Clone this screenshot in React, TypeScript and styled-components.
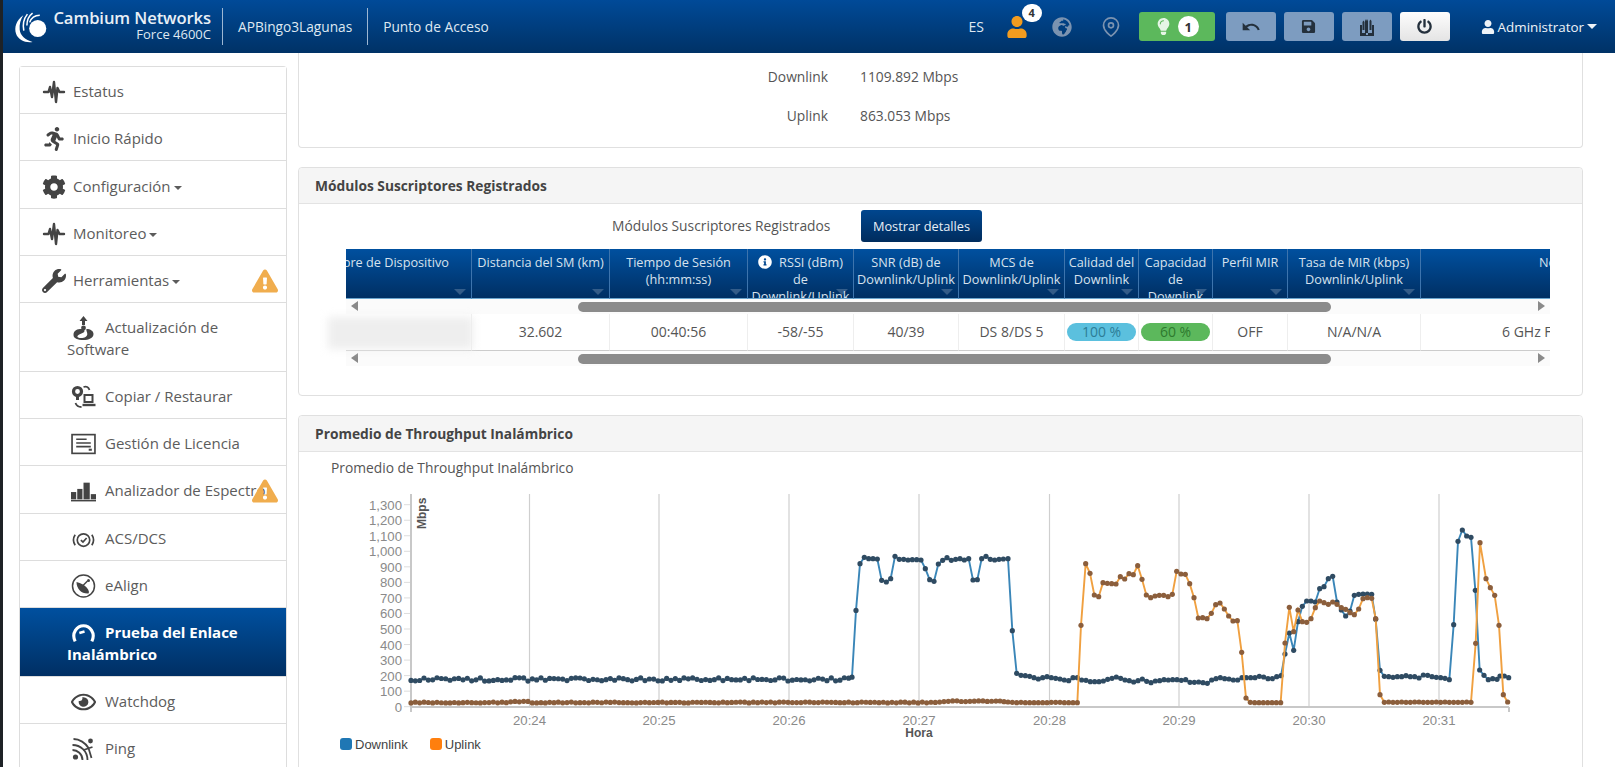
import React from 'react';
import styled, { createGlobalStyle } from 'styled-components';
import { FaCog, FaWrench, FaRunning, FaUser, FaLightbulb, FaSave, FaPowerOff, FaExclamationTriangle, FaInfoCircle, FaGlobeAfrica, FaRegEye } from 'react-icons/fa';
import { FiMapPin } from 'react-icons/fi';
import { MdUndo } from 'react-icons/md';

const Global = createGlobalStyle`
  html, body { margin: 0; padding: 0; height: 767px; overflow: hidden; background: #fff; }
  body { font-family: "Open Sans", "Noto Sans", sans-serif; color: #555; border-left: 3px solid #1e2226; box-sizing: border-box; }
  * { box-sizing: border-box; }
`;

const Shell = styled.div`width: 1612px; height: 767px; overflow: hidden; display: flex; flex-direction: column;`;
const TopBar = styled.header`
  height: 53px; flex: none; display: flex; align-items: center; color: #dfe8f2; font-size: 14px;
  background: linear-gradient(#004a98, #003266); padding-left: 11px;
`;
const Brand = styled.div`display: flex; align-items: center; width: 209px; height: 37px; border-right: 1px solid #9db7d3;`;
const BrandText = styled.div`margin: -2px 0 0 5px; width: 159px; text-align: right; line-height: 1;`;
const BrandName = styled.div`font-size: 16.6px; font-weight: 600; color: #e8eff6; white-space: nowrap; letter-spacing: -0.1px;`;
const BrandModel = styled.div`font-size: 13px; margin-top: 2px;`;
const HeaderCell = styled.div`height: 37px; display: flex; align-items: center; padding: 0 15px; border-right: ${p => p.$line ? '1px solid #9db7d3' : 'none'}; font-size: 13.7px; white-space: nowrap;`;
const HeaderRight = styled.div`margin-left: auto; display: flex; align-items: center; padding-right: 18px;`;
const Lang = styled.span`font-size: 14px; width: 37px;`;
const Alerts = styled.span`position: relative; display: flex; width: 46px; color: #f39c1f; font-size: 22px;`;
const CountBadge = styled.span`
  position: absolute; left: 16px; top: -12px; width: 20px; height: 18px; border-radius: 9px; background: #fff;
  color: #333; font-size: 11px; font-weight: 700; display: flex; align-items: center; justify-content: center;
`;
const NavGlyph = styled.span`display: flex; color: #7b93b0; font-size: 20px; width: ${p => p.$w}px;`;
const GreenButton = styled.div`
  width: 76px; height: 29px; border-radius: 3px; background: #5cb85c; display: flex; align-items: center; justify-content: center; gap: 6px;
  color: #e6f5e6; font-size: 17px; margin-left: 4px;
`;
const LampCount = styled.span`width: 21px; height: 21px; border-radius: 50%; background: #fff; color: #333; font-size: 13px; font-weight: 700; display: flex; align-items: center; justify-content: center;`;
const ToolButton = styled.div`
  width: 50px; height: 29px; margin-left: ${p => p.$ml}px; border-radius: 3px; display: flex; align-items: center; justify-content: center; font-size: ${p => p.$fs || 15}px; color: #24303c;
  background: ${p => p.$light ? 'linear-gradient(#fdfdfd, #e4e4e4)' : '#7d9cc0'};
`;
const UserMenu = styled.div`display: flex; align-items: center; gap: 3px; margin-left: 31px; font-size: 13.4px; color: #eef3f8;`;
const Caret = styled.span`display: inline-block; width: 0; height: 0; margin-left: ${p => p.$big ? 0 : 3}px; vertical-align: middle; border-left: ${p => p.$big ? 5 : 4}px solid transparent; border-right: ${p => p.$big ? 5 : 4}px solid transparent; border-top: ${p => p.$big ? 5 : 4}px solid currentColor;`;

const Body = styled.div`flex: 1; min-height: 0; display: flex; align-items: flex-start;`;
const Side = styled.nav`
  width: 268px; margin: 13px 0 0 16px; flex: none; border: 1px solid #ddd; border-bottom: 0; border-radius: 4px 4px 0 0; background: #fff;
`;
const Item = styled.div`
  position: relative; font-size: 15px; line-height: 21.4px; border-bottom: 1px solid #ddd;
  padding: 14.2px 8px 10.65px ${p => p.$sub ? 47 : 22}px;
  color: ${p => p.$active ? '#fff' : '#5c5c5c'}; font-weight: ${p => p.$active ? 700 : 400};
  background: ${p => p.$active ? 'linear-gradient(#00509f, #002f63)' : '#fff'};
`;
const ItemIcon = styled.span`
  display: inline-block; vertical-align: -2px; height: 14px; width: ${p => p.$sub ? 25 : 24}px;
  margin: ${p => p.$sub ? '0 9px 0 4px' : '0 7px 0 0'}; color: ${p => p.$active ? '#fff' : '#444'};
  svg { display: block; width: ${p => p.$sub ? 25 : 24}px; height: 24px; margin: -5px 0; }
`;
const Warn = styled.span`position: absolute; right: 8px; top: ${p => p.$top}px; color: #f0ad4e; font-size: 26px; display: flex;`;

const Main = styled.main`flex: 1; margin: 0 32px 0 11px; display: flex; flex-direction: column; gap: 19px; min-width: 0;`;
const Panel = styled.section`position: relative; background: #fff; border: 1px solid #e0e0e0; border-radius: ${p => p.$cut ? '0 0 4px 4px' : '4px'}; ${p => p.$cut ? 'border-top: 0;' : ''} ${p => p.$tail ? 'padding-bottom: 40px;' : ''}`;
const PanelHead = styled.h3`margin: 0; height: 36px; padding: 0 16px; display: flex; align-items: center; background: #f5f5f5; border-bottom: 1px solid #e3e3e3; font-size: 13.75px; font-weight: 700; color: #444; border-radius: 4px 4px 0 0;`;
const Rates = styled.div`padding: 4px 0 11.5px;`;
const Rate = styled.div`display: grid; grid-template-columns: 529px auto; column-gap: 32px; height: 39px; align-items: center; font-size: 13.8px; color: #555;`;
const RateLabel = styled.span`text-align: right;`;
const SmBar = styled.div`display: flex; align-items: center; height: 32px; margin-top: 6px; padding-left: 313px; font-size: 13.8px; color: #555;`;
const SmLabel = styled.span`width: 218px; white-space: nowrap;`;
const PrimaryButton = styled.div`width: 121px; height: 32px; margin-left: 31px; border-radius: 3px; display: flex; align-items: center; justify-content: center; background: linear-gradient(#00468e, #002c5d); color: #e8eff6; font-size: 12.8px;`;
const TableClip = styled.div`position: relative; width: 1204px; margin: 7px 0 29px 47px; overflow: hidden;`;
const Row = styled.div`display: flex; margin-left: -54px;`;
const HeadCell = styled.div`
  position: relative; flex: none; width: ${p => p.$w}px; height: 50px; overflow: hidden; padding: 5px 1px 0; text-align: ${p => p.$align || 'center'}; ${p => p.$pad ? `padding-${p.$align === 'right' ? 'right' : 'left'}: ${p.$pad}px;` : ''}
  background: linear-gradient(#00509f, #002f63); color: #d7e2ee; font-size: 12.7px; line-height: 17px; border-right: 1px solid #3d74ad; border-bottom: 1px solid #6ba6cf;
`;
const Sort = styled.span`position: absolute; right: 5px; bottom: 3px; border-left: 6px solid transparent; border-right: 6px solid transparent; border-top: 6px solid rgba(255,255,255,.2);`;
const HeadInfo = styled.span`display: inline-flex; vertical-align: -2px; font-size: 14px; color: #fff; margin-right: 7px;`;
const Track = styled.div`position: relative; height: ${p => p.$h}px; background: #fbfbfb; display: flex; align-items: center; justify-content: space-between; padding: 0 5px;`;
const Arrow = styled.span`width: 0; height: 0; border-top: 5px solid transparent; border-bottom: 5px solid transparent; ${p => p.$right ? 'border-left: 7px solid #8a8a8a;' : 'border-right: 7px solid #8a8a8a;'}`;
const Thumb = styled.span`position: absolute; left: 232px; width: 753px; top: 3px; height: 10px; border-radius: 5px; background: #8b8b8b;`;
const BodyCell = styled.div`flex: none; width: ${p => p.$w}px; height: 37px; overflow: hidden; display: flex; align-items: center; justify-content: ${p => p.$start ? 'flex-start' : 'center'}; ${p => p.$start ? `padding-left: ${p.$start}px;` : ''} white-space: nowrap; font-size: 14px; color: #555; border-right: 1px solid #eee; border-bottom: 1px solid #ccc;`;
const Pill = styled.span`width: 69px; height: 18px; border-radius: 9px; background: ${p => p.$c}; color: ${p => p.$t}; font-size: 14px; display: flex; align-items: center; justify-content: center;`;
const Smudge = styled.div`position: absolute; left: 29px; top: 149px; width: 145px; height: 32px; background: #eeeeee; filter: blur(4px);`;
const ChartTitle = styled.div`font-size: 13.8px; color: #555; padding: 6px 0 0 32px; height: 34px;`;
const ChartSvg = styled.svg`display: block; margin-left: 31px;`;
const Legend = styled.div`display: flex; gap: 22px; padding-left: 41px; margin-top: -5px; font-family: "Liberation Sans", Arial, sans-serif; font-size: 13px; color: #444;`;
const LegendItem = styled.span`display: flex; align-items: center; gap: 3px;`;
const Swatch = styled.span`width: 12px; height: 12px; border-radius: 3px; background: ${p => p.$c};`;

const Line = ({ d, w = 2 }: { d: string; w?: number }) => <svg viewBox="0 0 24 24" fill="none" stroke="currentColor" strokeWidth={w} strokeLinejoin="round" strokeLinecap="round"><path d={d} /></svg>;
const Pulse = () => <Line w={2.4} d="M2 12H6.5L8 7L10 17L12 2L14 22L15.5 8L17.5 12H22" />;
const UpdateIcon = () => <svg viewBox="0 0 24 24" fill="currentColor"><path d="M12 0L16 5H13.5V9H10.5V5H8Z" /><circle cx="12" cy="12" r="2.4" /><path d="M2 19C2 14 6 13 10 13C13 13 14 15 12 16.5C9 18.5 7 18 6 20C5 22 11 23 14 21C18 18.5 14 15 15 13C19 13 22 15 22 18C22 22 17 24 12 24C6 24 2 22.5 2 19Z" /></svg>;
const CopyIcon = () => <svg viewBox="0 0 24 24" fill="none" stroke="currentColor" strokeWidth="2"><circle cx="6" cy="6.5" r="4" strokeWidth="3.2" /><path d="M6 11V15" strokeWidth="3" /><rect x="13" y="10" width="8" height="7" /><path d="M11 20H24" strokeWidth="2.4" /><path d="M12 2C15 1 17 2 18 5M4 18C5 21 7 22 10 22" strokeWidth="1.8" /></svg>;
const LicenseIcon = () => <svg viewBox="0 0 24 20" fill="none" stroke="currentColor"><rect x="1" y="1" width="22" height="18" strokeWidth="1.6" /><path d="M5 5.5H15M5 9H19M5 12.5H19" strokeWidth="1.5" /><path d="M17 15.5H20" strokeWidth="2" /></svg>;
const BarsIcon = () => <svg viewBox="0 0 24 20" fill="currentColor"><rect x="0" y="11" width="5" height="7" /><rect x="6" y="8" width="5" height="10" /><rect x="12" y="2" width="6" height="16" /><rect x="19" y="13" width="5" height="5" /><rect y="18.5" width="24" height="1.5" /></svg>;
const AcsIcon = () => <svg viewBox="0 0 24 20" fill="none" stroke="currentColor" strokeWidth="1.6"><circle cx="12" cy="11" r="6" /><path d="M9.5 11L11.5 13L15 9" /><path d="M4 6C2 9 2 13 4 16M20 6C22 9 22 13 20 16" /></svg>;
const AlignIcon = () => <svg viewBox="0 0 24 24"><circle cx="12" cy="12" r="11" fill="none" stroke="currentColor" strokeWidth="1.5" /><path d="M5 8C5 15 10 20 17 19.5C19 17 14 10 5 8Z" fill="currentColor" /><path d="M11 12L16 7" stroke="currentColor" strokeWidth="1.4" /><circle cx="17" cy="6.5" r="1.5" fill="currentColor" /></svg>;
const GaugeIcon = () => <svg viewBox="0 0 24 20" fill="none" stroke="currentColor" strokeWidth="3"><path d="M4 18C0 10 6 3 12 3C18 3 24 10 20 18" /><path d="M8 10L13 8.5" strokeWidth="2.4" /></svg>;
const PingIcon = () => <svg viewBox="0 0 24 24" fill="none" stroke="currentColor" strokeWidth="1.8"><circle cx="4" cy="20" r="2.6" fill="currentColor" stroke="none" /><path d="M1 13C6 13 11 17 11 23M1 8C9 8 16 14 16 23" /><circle cx="19" cy="4" r="2.4" fill="currentColor" stroke="none" /><path d="M2 2C8 2 14 6 17 11L20 21M12 13L21 10" /></svg>;
const Logo = () => (
  <svg width="33" height="33" viewBox="0 0 32 32" fill="#fff" style={{ flex: 'none' }}>
    <path d="M9 5C2 10 0 17 2 23C4 29 11 32 18 31C11 29 6 25 5.5 19C5 14 6.5 9 9 5Z" />
    <circle cx="23" cy="18" r="8.3" />
    <path d="M13 4C9 9 8.5 15 9.5 20M18 3C14 6 12.5 10 12.5 15M25 5C20 5 16.5 8 15.2 12" fill="none" stroke="#fff" strokeWidth="1.5" />
  </svg>
);
const ToolsIcon = () => <svg width="14" height="18" viewBox="0 0 14 18" fill="currentColor"><path d="M0 7H2V15H5V3L6 1L7 3V1L8 3V15H12V7H14V18H0Z" /><path d="M9.5 3L10.5 1.5L11.5 3V12H9.5Z" /><path d="M2.5 4L3.5 2.5L4.5 4V12H2.5Z" /><rect x="6" y="15" width="2" height="2" fill="#7d9cc0" /></svg>;

const items: { label: string; icon: React.ReactNode; sub?: boolean; caret?: boolean; active?: boolean; warn?: number }[] = [
  { label: 'Estatus', icon: <Pulse /> },
  { label: 'Inicio Rápido', icon: <FaRunning /> },
  { label: 'Configuración', icon: <FaCog />, caret: true },
  { label: 'Monitoreo', icon: <Pulse />, caret: true },
  { label: 'Herramientas', icon: <FaWrench />, caret: true, warn: 12 },
  { label: 'Actualización de Software', icon: <UpdateIcon />, sub: true },
  { label: 'Copiar / Restaurar', icon: <CopyIcon />, sub: true },
  { label: 'Gestión de Licencia', icon: <LicenseIcon />, sub: true },
  { label: 'Analizador de Espectro', icon: <BarsIcon />, sub: true, warn: 12 },
  { label: 'ACS/DCS', icon: <AcsIcon />, sub: true },
  { label: 'eAlign', icon: <AlignIcon />, sub: true },
  { label: 'Prueba del Enlace Inalámbrico', icon: <GaugeIcon />, sub: true, active: true },
  { label: 'Watchdog', icon: <FaRegEye />, sub: true },
  { label: 'Ping', icon: <PingIcon />, sub: true },
];

const columns: { head: React.ReactNode; cell: React.ReactNode; w: number }[] = [
  { head: 'Distancia del SM (km)', cell: '32.602', w: 138 },
  { head: <>Tiempo de Sesión<br />(hh:mm:ss)</>, cell: '00:40:56', w: 138 },
  { head: <><HeadInfo><FaInfoCircle /></HeadInfo>RSSI (dBm)<br />de<br />Downlink/Uplink</>, cell: '-58/-55', w: 106 },
  { head: <>SNR (dB) de<br />Downlink/Uplink</>, cell: '40/39', w: 105 },
  { head: <>MCS de<br />Downlink/Uplink</>, cell: 'DS 8/DS 5', w: 106 },
  { head: <>Calidad del<br />Downlink</>, cell: <Pill $c="#5bc0de" $t="#2d7d96">100 %</Pill>, w: 74 },
  { head: 'Capacidad de Downlink', cell: <Pill $c="#5cb85c" $t="#2e7a2e">60 %</Pill>, w: 74 },
  { head: 'Perfil MIR', cell: 'OFF', w: 75 },
  { head: <>Tasa de MIR (kbps)<br />Downlink/Uplink</>, cell: 'N/A/N/A', w: 133 },
];

const px = (x: number, y: number) => `${x},${y}`;
const yOf = (v: number) => 705.7 - v * 0.1554;
const rnd = (i: number) => { const s = Math.sin(i * 12.9898 + 4.1) * 43758.5453; return s - Math.floor(s); };
const z8 = (a: number[]) => { const o: [number, number][] = []; for (let i = 0; i < a.length; i += 2) o.push([1000 + a[i] / 3, 500 + a[i + 1] / 3]); return o; };
const z9 = (a: number[]) => { const o: [number, number][] = []; for (let i = 0; i < a.length; i += 2) o.push([840 + a[i] / 3, 530 + a[i + 1] / 3]); return o; };
const flat = (from: number, to: number, zy: number) => { const o: number[] = []; for (let x = from; x <= to; x += 13) o.push(x, zy + (rnd(x) > 0.7 ? -1 : 0)); return o; };

const blue: [number, number][] = [];
for (let x = 411; x <= 852; x += 4.333) blue.push([x, yOf(165 + rnd(x) * 22)]);
blue.push([852, yOf(190)], [856, 609.4]);
blue.push(...z9([60, 98, 73, 79, 86, 83, 99, 83, 112, 84, 125, 148, 139, 153, 152, 143, 165, 76, 178, 85, 191, 85, 204, 87, 217, 86, 230, 86, 243, 87, 256, 113, 269, 146, 282, 151, 295, 99, 308, 88, 321, 80, 334, 88, 347, 85, 360, 83, 373, 87, 386, 83, 399, 147, 412, 146, 425, 83, 438, 76, 451, 85, 464, 87, 477, 85, 490, 84, 504, 83]));
blue.push(...z8([37, 389, 50, 517, 63, 523, 76, 524, 89, 526, 102, 530, 115, 534, 128, 530, 141, 527, 154, 530, 167, 532, 180, 534, 193, 537, 206, 539, 219, 530, 232, 530, 245, 537, 258, 538, 271, 542, 284, 542, 297, 542, 310, 540, 323, 535, 336, 532, 349, 528, 362, 532, 375, 537, 388, 539, 401, 543, 414, 539, 427, 534, 440, 541, 453, 545, 466, 540, 479, 539, 492, 536, 505, 537, 518, 536, 531, 536, 544, 538, 557, 536, 570, 544, 583, 544, 596, 543, 609, 545, 622, 547, 635, 537, 648, 533, 661, 530, 674, 533, 687, 534, 700, 537, 713, 537, 726, 530, 739, 530, 752, 530, 765, 530, 778, 526, 791, 528, 804, 533, 817, 533, 830, 527, 843, 524, 855, 459, 868, 396, 881, 448, 894, 362, 907, 316, 920, 300, 933, 300, 946, 303, 959, 263, 972, 257, 985, 233, 998, 226, 1011, 303, 1024, 327, 1037, 345, 1050, 330, 1063, 283, 1076, 280, 1089, 279, 1102, 279, 1115, 280, 1127, 355, 1140, 508, 1153, 526, 1166, 527, 1179, 529, 1192, 527, 1205, 527, 1218, 524, 1231, 527, 1244, 527, 1257, 531, 1270, 522, 1283, 523, 1296, 527, 1309, 529, 1322, 530, 1335, 532, 1348, 536, 1361, 371, 1374, 121, 1387, 87, 1400, 105, 1413, 109, 1426, 268, 1439, 507, 1452, 523, 1465, 536, 1478, 533, 1491, 535, 1500, 525, 1513, 525, 1526, 530]));

const orange: [number, number][] = [];
for (let x = 411; x < 1000; x += 4.333) orange.push([x, yOf(24 + rnd(x + 7) * 6 + (x > 940 ? 8 : 0) + (x > 510 && x < 530 ? 5 : 0))]);
orange.push(...z8([0, 600, 12, 602, 24, 603, 37, 604, ...flat(50, 232, 605), 243, 373, 257, 188, 270, 217, 283, 282, 296, 287, 309, 245, 322, 247, 335, 248, 348, 249, 361, 227, 374, 234, 387, 218, 400, 221, 413, 194, 426, 235, 439, 282, 452, 290, 465, 285, 478, 283, 491, 283, 504, 287, 517, 280, 530, 211, 543, 219, 556, 220, 569, 248, 582, 290, 595, 351, 608, 350, 621, 353, 634, 337, 647, 311, 660, 306, 673, 324, 686, 345, 699, 360, 712, 359, 725, 454, 738, 591, ...flat(751, 843, 605), 855, 426, 868, 319, 881, 392, 894, 327, 907, 362, 920, 364, 933, 353, 946, 320, 959, 300, 972, 305, 985, 310, 998, 303, 1011, 310, 1024, 320, 1037, 325, 1050, 335, 1063, 341, 1076, 324, 1089, 293, 1102, 290, 1115, 292, 1127, 353, 1140, 581, ...flat(1153, 1414, 604), 1427, 427, 1440, 125, 1458, 233, 1471, 260, 1484, 283, 1497, 373, 1510, 581, 1523, 603]));

const Series = ({ pts, stroke, dot }: { pts: [number, number][]; stroke: string; dot: string }) => (
  <g>
    <polyline points={pts.map(p => px(p[0], p[1])).join(' ')} fill="none" stroke={stroke} strokeWidth="1.9" />
    {pts.map((p, i) => <circle key={i} cx={p[0]} cy={p[1]} r="2.6" fill={dot} />)}
  </g>
);

const Chart = () => {
  const gx = [529.5, 659, 789, 919, 1049.5, 1179, 1309, 1439];
  const times = ['20:24', '20:25', '20:26', '20:27', '20:28', '20:29', '20:30', '20:31'];
  const ticks = Array.from({ length: 14 }, (_, i) => i * 100);
  return (
    <ChartSvg width="1200" height="256" viewBox="330 485 1200 256" fontFamily="'Liberation Sans', Arial, sans-serif">
      {gx.map(x => <line key={x} x1={x} x2={x} y1={493} y2={706} stroke="#cfcfcf" strokeWidth="1.2" />)}
      {ticks.map(t => (
        <g key={t}>
          <line x1={404} x2={411} y1={yOf(t)} y2={yOf(t)} stroke="#ddd" />
          <text x={402} y={yOf(t) + 5} textAnchor="end" fontSize="13.2" fill="#8a8a8a">{t.toLocaleString('en-US')}</text>
        </g>
      ))}
      <line x1={411} x2={411} y1={493} y2={711} stroke="#c8c8c8" strokeWidth="2" />
      <line x1={411} x2={1509} y1={706} y2={706} stroke="#c8c8c8" strokeWidth="2" />
      <line x1={1509} x2={1509} y1={706} y2={711} stroke="#c8c8c8" strokeWidth="2" />
      {gx.map((x, i) => <text key={x} x={x} y={724} textAnchor="middle" fontSize="13.2" fill="#8a8a8a">{times[i]}</text>)}
      <text x={919} y={736} textAnchor="middle" fontSize="12" fontWeight="700" fill="#555">Hora</text>
      <text transform="translate(426 528) rotate(-90)" fontSize="12" fontWeight="700" fill="#555">Mbps</text>
      <Series pts={blue} stroke="#3a86b8" dot="#2f4b62" />
      <Series pts={orange} stroke="#f0a040" dot="#8b5e3c" />
    </ChartSvg>
  );
};

export default function App() {
  return (
    <Shell>
      <Global />
      <TopBar>
        <Brand>
          <Logo />
          <BrandText>
            <BrandName>Cambium Networks</BrandName>
            <BrandModel>Force 4600C</BrandModel>
          </BrandText>
        </Brand>
        <HeaderCell $line>APBingo3Lagunas</HeaderCell>
        <HeaderCell>Punto de Acceso</HeaderCell>
        <HeaderRight>
          <Lang>ES</Lang>
          <Alerts><FaUser /><CountBadge>4</CountBadge></Alerts>
          <NavGlyph $w={49}><FaGlobeAfrica /></NavGlyph>
          <NavGlyph $w={34}><FiMapPin /></NavGlyph>
          <GreenButton><FaLightbulb /><LampCount>1</LampCount></GreenButton>
          <ToolButton $ml={11} $fs={20}><MdUndo /></ToolButton>
          <ToolButton $ml={8}><FaSave /></ToolButton>
          <ToolButton $ml={8}><ToolsIcon /></ToolButton>
          <ToolButton $ml={8} $light><FaPowerOff /></ToolButton>
          <UserMenu><FaUser size={14} />Administrator<Caret $big /></UserMenu>
        </HeaderRight>
      </TopBar>
      <Body>
        <Side>
          {items.map(it => (
            <Item key={it.label} $sub={it.sub} $active={it.active}>
              <ItemIcon $sub={it.sub} $active={it.active}>{it.icon}</ItemIcon>
              {it.label}{it.caret && <Caret />}
              {it.warn && <Warn $top={it.warn}><FaExclamationTriangle /></Warn>}
            </Item>
          ))}
        </Side>
        <Main>
          <Panel $cut>
            <Rates>
              <Rate><RateLabel>Downlink</RateLabel><span>1109.892 Mbps</span></Rate>
              <Rate><RateLabel>Uplink</RateLabel><span>863.053 Mbps</span></Rate>
            </Rates>
          </Panel>
          <Panel>
            <PanelHead>Módulos Suscriptores Registrados</PanelHead>
            <SmBar>
              <SmLabel>Módulos Suscriptores Registrados</SmLabel>
              <PrimaryButton>Mostrar detalles</PrimaryButton>
            </SmBar>
            <TableClip>
              <Row>
                <HeadCell $w={180} $align="right" $pad={22}>Nombre de Dispositivo<Sort /></HeadCell>
                {columns.map((c, i) => <HeadCell key={i} $w={c.w}>{c.head}<Sort /></HeadCell>)}
                <HeadCell $w={300} $align="left" $pad={118}>Nombre<Sort /></HeadCell>
              </Row>
              <Track $h={15}><Arrow /><Thumb /><Arrow $right /></Track>
              <Row>
                <BodyCell $w={180} />
                {columns.map((c, i) => <BodyCell key={i} $w={c.w}>{c.cell}</BodyCell>)}
                <BodyCell $w={300} $start={81}>6 GHz Force</BodyCell>
              </Row>
              <Track $h={15}><Arrow /><Thumb /><Arrow $right /></Track>
            </TableClip>
            <Smudge />
          </Panel>
          <Panel $tail>
            <PanelHead>Promedio de Throughput Inalámbrico</PanelHead>
            <ChartTitle>Promedio de Throughput Inalámbrico</ChartTitle>
            <Chart />
            <Legend>
              <LegendItem><Swatch $c="#1f77b4" />Downlink</LegendItem>
              <LegendItem><Swatch $c="#ff7f0e" />Uplink</LegendItem>
            </Legend>
          </Panel>
        </Main>
      </Body>
    </Shell>
  );
}
